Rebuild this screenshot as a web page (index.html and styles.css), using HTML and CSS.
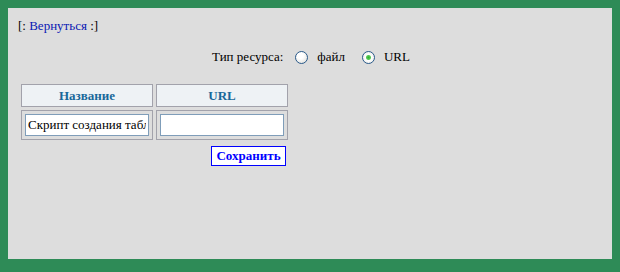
FILE: index.html
```html
<!DOCTYPE html>
<html lang="ru">
  <head>
    <meta charset="UTF-8" />
    <title>Ресурс</title>
    <link rel="stylesheet" href="styles.css">
  </head>
  <body>
    <div class="page">
      <div class="back">[: <a href="#">Вернуться</a> :]</div>
      <form class="resource">
        <div class="type">
          <span>Тип ресурса:</span>
          <label><input type="radio" name="type" value="file" /> файл</label>
          <label><input type="radio" name="type" value="url" checked /> URL</label>
        </div>
        <table class="fields">
          <tr>
            <th>Название</th>
            <th>URL</th>
          </tr>
          <tr>
            <td><input type="text" name="name" value="Скрипт создания таблиц" /></td>
            <td><input type="text" name="url" value="" /></td>
          </tr>
          <tr>
            <td colspan="2" class="actions"><input type="submit" value="Сохранить" class="save" /></td>
          </tr>
        </table>
      </form>
    </div>
  </body>
</html>
```

FILE: styles.css
```css
body {
  margin: 0;
  background-color: #2e8b57;
  font-family: "Liberation Serif", "Times New Roman", serif;
  font-size: 13px;
}

.page {
  box-sizing: border-box;
  margin: 8px;
  height: 251px;
  padding: 10px;
  background-color: #dddddd;
}

.back {
  line-height: 16px;
}

.back a {
  color: #0b19b4;
  text-decoration: none;
}

.type {
  display: flex;
  justify-content: center;
  align-items: center;
  margin-top: 13px;
  padding-left: 2px;
  line-height: 20px;
}

.type label {
  display: flex;
  align-items: center;
  margin-left: 12px;
}

.type input {
  appearance: none;
  width: 13px;
  height: 13px;
  margin: 0 9px 0 0;
  border: 1px solid #2a5a8a;
  border-radius: 50%;
  background: radial-gradient(circle at 40% 35%, #ffffff 30%, #d8d8d2 100%);
}

.type input:checked {
  background: radial-gradient(circle, #2fb32f 0, #57c957 2px, #ffffff 3px, #e6e6e0 100%);
}

.type label:last-child {
  margin-left: 17px;
}

.fields {
  margin-top: 14px;
  border-spacing: 3px;
}

.fields th,
.fields td {
  border: 1px solid #a2a2ab;
  padding: 3px;
}

.fields th {
  width: 124px;
  line-height: 15px;
  background-color: #eef2f5;
  color: #19689a;
}

.fields td input[type="text"] {
  box-sizing: border-box;
  display: block;
  width: 124px;
  height: 22px;
  margin: 0;
  padding: 1px 2px;
  border: 1px solid #7f9db9;
  font-family: "Liberation Serif", "Times New Roman", serif;
  font-size: 13px;
}

.fields td.actions {
  border: none;
  padding: 3px 2px 0 0;
  text-align: right;
}

.save {
  width: 75px;
  height: 20px;
  padding: 0;
  border: 1px solid #0000ff;
  background-color: #ffffff;
  color: #0000ff;
  font-family: "Liberation Serif", "Times New Roman", serif;
  font-size: 13px;
  font-weight: bold;
}
```
